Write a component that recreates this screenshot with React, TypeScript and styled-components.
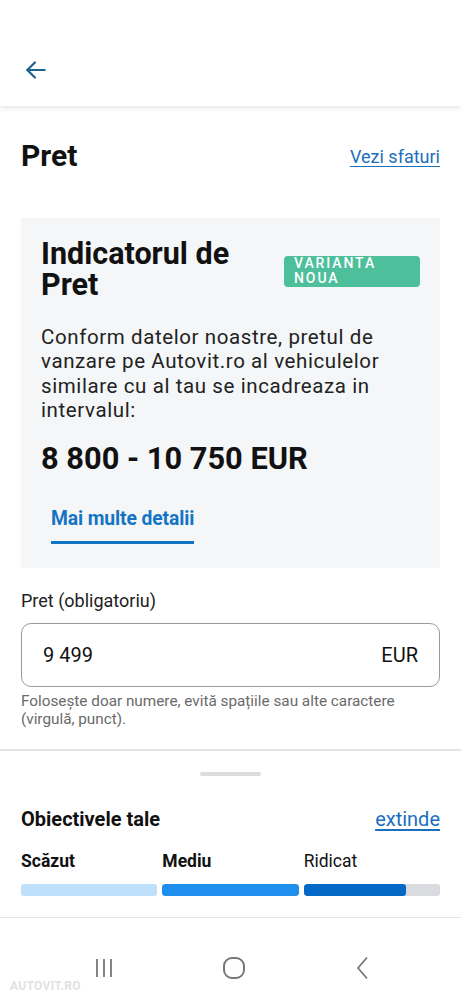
import React from 'react';
import styled, { createGlobalStyle } from 'styled-components';

const Global = createGlobalStyle`
    body {
        margin: 0;
        background: #ffffff;
        font-family: Roboto, "Liberation Sans", sans-serif;
        color: #111;
    }
`;

const Screen = styled.div`
    width: 461px;
    height: 999px;
    display: flex;
    flex-direction: column;
    overflow: hidden;
    background: #fff;
`;

const TopBar = styled.header`
    height: 106px;
    flex-shrink: 0;
    display: flex;
    align-items: center;
    padding: 34px 0 0 23px;
    box-sizing: border-box;
    box-shadow: 0 2px 5px rgba(0, 0, 0, 0.1);
    position: relative;
    z-index: 1;
`;

const Section = styled.section`
    padding: 30px 21px 0 21px;
    display: flex;
    flex-direction: column;
`;

const Row = styled.div<{ top?: number }>`
    display: flex;
    justify-content: space-between;
    align-items: center;
    margin-top: ${p => p.top ?? 0}px;
`;

const PageTitle = styled.h1`
    margin: 0;
    font-size: 30px;
    line-height: 40px;
    font-weight: 700;
`;

const TextLink = styled.a<{ size: number }>`
    color: #1c6fbd;
    font-size: ${p => p.size}px;
    text-decoration: underline;
    text-underline-offset: 3px;
`;

const Card = styled.div`
    margin-top: 42px;
    background: #f4f6f8;
    padding: 20px 20px 24px 20px;
    display: flex;
    flex-direction: column;
`;

const CardHeader = styled.div`
    display: flex;
    align-items: center;
    gap: 20px;
`;

const CardTitle = styled.h2`
    flex: 1;
    margin: 0;
    font-size: 30.5px;
    line-height: 31px;
    font-weight: 700;
`;

const Badge = styled.span`
    width: 136px;
    box-sizing: border-box;
    background: #4dbf9a;
    color: #fff;
    border-radius: 4px;
    padding: 0 10px;
    font-size: 14px;
    line-height: 15.5px;
    font-weight: 500;
    letter-spacing: 1.9px;
    margin-top: 4px;
`;

const Paragraph = styled.p`
    margin: 25px 0 0 0;
    font-size: 20.5px;
    line-height: 24.4px;
    letter-spacing: 0.6px;
    color: #222;
`;

const Range = styled.div`
    margin-top: 18px;
    font-size: 30.8px;
    line-height: 36px;
    font-weight: 700;
`;

const TabButton = styled.button`
    align-self: flex-start;
    margin: 30px 0 0 10px;
    padding: 0 0 10px 0;
    background: none;
    border: none;
    border-bottom: 3px solid #1474c4;
    color: #1474c4;
    font-family: inherit;
    font-size: 19.3px;
    line-height: 24px;
    font-weight: 700;
    letter-spacing: -0.1px;
`;

const FieldLabel = styled.label`
    margin-top: 22px;
    font-size: 18px;
    line-height: 22px;
    color: #222;
`;

const InputBox = styled.div`
    margin-top: 11px;
    height: 64px;
    box-sizing: border-box;
    border: 1px solid #9a9a9a;
    border-radius: 10px;
    display: flex;
    align-items: center;
    justify-content: space-between;
    padding: 0 21px;
    font-size: 20px;
    color: #111;
`;

const Helper = styled.div`
    margin-top: 5px;
    font-size: 15.3px;
    line-height: 18px;
    color: #6a6a6a;
`;

const Divider = styled.hr<{ top: number; thick: number }>`
    margin: ${p => p.top}px 0 0 0;
    border: none;
    height: ${p => p.thick}px;
    background: #e4e4e4;
    flex-shrink: 0;
`;

const Sheet = styled.div`
    padding: 0 21px 21px 21px;
    display: flex;
    flex-direction: column;
`;

const Handle = styled.div`
    align-self: center;
    margin-top: 21px;
    width: 61px;
    height: 4px;
    border-radius: 2px;
    background: #dcdcdc;
`;

const SheetTitle = styled.h3`
    margin: 0;
    font-size: 20px;
    line-height: 24px;
    font-weight: 700;
`;

const Levels = styled.div`
    margin-top: 19px;
    display: grid;
    grid-template-columns: repeat(3, 1fr);
    column-gap: 5px;
    row-gap: 12px;
`;

const LevelName = styled.span<{ bold: boolean }>`
    font-size: 17.5px;
    line-height: 22px;
    font-weight: ${p => (p.bold ? 700 : 400)};
    color: #111;
`;

const Track = styled.div`
    height: 12px;
    border-radius: 3px;
    background: #d9dbde;
    overflow: hidden;
`;

const Fill = styled.div<{ color: string }>`
    height: 100%;
    border-radius: 3px;
    background: ${p => p.color};
`;

const NavBar = styled.nav`
    flex: 1;
    display: flex;
    justify-content: space-between;
    align-items: flex-start;
    padding: 38px 86px 0 92px;
    position: relative;
`;

const Watermark = styled.span`
    position: absolute;
    left: 10px;
    bottom: 6px;
    font-size: 12px;
    font-weight: 700;
    color: rgba(200, 200, 200, 0.55);
    letter-spacing: 0.3px;
`;

const levels = [
    { name: 'Scăzut', bold: true, color: '#bfe0fb', fill: 100 },
    { name: 'Mediu', bold: true, color: '#1e8fec', fill: 100 },
    { name: 'Ridicat', bold: false, color: '#0468c6', fill: 75 },
];

const App: React.FC = () => {
    return (
        <Screen>
            <Global />
            <TopBar>
                <svg width="26" height="26" viewBox="0 0 24 24" fill="none" stroke="#19608e" strokeWidth="2" strokeLinecap="round" strokeLinejoin="round">
                    <path d="M20 12H4" />
                    <path d="M11 5l-7 7 7 7" />
                </svg>
            </TopBar>
            <Section>
                <Row>
                    <PageTitle>Pret</PageTitle>
                    <TextLink size={18}>Vezi sfaturi</TextLink>
                </Row>
                <Card>
                    <CardHeader>
                        <CardTitle>Indicatorul de Pret</CardTitle>
                        <Badge>VARIANTA NOUA</Badge>
                    </CardHeader>
                    <Paragraph>
                        Conform datelor noastre, pretul de vanzare pe Autovit.ro al vehiculelor similare cu al tau se incadreaza in intervalul:
                    </Paragraph>
                    <Range>8 800 - 10 750 EUR</Range>
                    <TabButton>Mai multe detalii</TabButton>
                </Card>
                <FieldLabel>Pret (obligatoriu)</FieldLabel>
                <InputBox>
                    <span>9 499</span>
                    <span>EUR</span>
                </InputBox>
                <Helper>Folosește doar numere, evită spațiile sau alte caractere (virgulă, punct).</Helper>
            </Section>
            <Divider top={21} thick={2} />
            <Sheet>
                <Handle />
                <Row top={31}>
                    <SheetTitle>Obiectivele tale</SheetTitle>
                    <TextLink size={20}>extinde</TextLink>
                </Row>
                <Levels>
                    {levels.map(l => (
                        <LevelName key={l.name} bold={l.bold}>{l.name}</LevelName>
                    ))}
                    {levels.map(l => (
                        <Track key={l.name + '-bar'}>
                            <Fill color={l.color} style={{ width: `${l.fill}%` }} />
                        </Track>
                    ))}
                </Levels>
            </Sheet>
            <Divider top={0} thick={1} />
            <NavBar>
                <svg width="24" height="24" viewBox="0 0 24 24" stroke="#777" strokeWidth="1.8">
                    <path d="M5 3v18M12 3v18M19 3v18" />
                </svg>
                <svg width="24" height="24" viewBox="0 0 24 24" fill="none" stroke="#777" strokeWidth="2">
                    <rect x="2" y="2" width="20" height="20" rx="8" />
                </svg>
                <svg width="24" height="24" viewBox="0 0 24 24" fill="none" stroke="#777" strokeWidth="1.8" strokeLinejoin="round">
                    <path d="M16 1.5L7 12l9 10.5" />
                </svg>
                <Watermark>AUTOVIT.RO</Watermark>
            </NavBar>
        </Screen>
    );
};

export default App;
